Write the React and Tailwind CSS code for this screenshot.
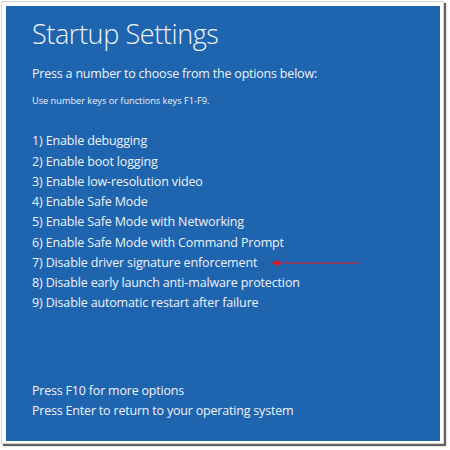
const options = [
  '1) Enable debugging',
  '2) Enable boot logging',
  '3) Enable low-resolution video',
  '4) Enable Safe Mode',
  '5) Enable Safe Mode with Networking',
  '6) Enable Safe Mode with Command Prompt',
  '7) Disable driver signature enforcement',
  '8) Disable early launch anti-malware protection',
  '9) Disable automatic restart after failure',
];

const Arrow = () => (
  <svg width="90" height="8" viewBox="0 0 90 8" className="ml-[14px]">
    <line x1="6" y1="4" x2="89" y2="4" stroke="#a8324f" strokeWidth="1.3" />
    <polygon points="0,4 8,1 8,7" fill="#e3141e" />
  </svg>
);

export default function App() {
  return (
    <div className="w-[450px] h-[450px] bg-white">
      <div className="w-[443px] h-[443px] ml-px mt-px border border-[#d4d4d4] bg-white p-[4px] shadow-[2px_2px_1px_rgba(60,60,60,0.8)]">
        <div className="w-[434px] h-[435px] bg-[#1f64ae] text-[#eef3fa] flex flex-col pl-[26px] font-['Open_Sans',sans-serif]">
          <h1 className="text-[27px] font-light leading-none mt-[14px] tracking-[-0.4px]">Startup Settings</h1>
          <p className="text-[12.5px] leading-none mt-[21px] tracking-[-0.2px]">Press a number to choose from the options below:</p>
          <p className="text-[9.2px] leading-none mt-[15px]">Use number keys or functions keys F1-F9.</p>
          <ul className="mt-[27px] text-[12.5px] tracking-[-0.15px]">
            {options.map((o, i) => (
              <li key={o} className="h-[20.25px] flex items-center">
                <span>{o}</span>
                {i === 6 && <Arrow />}
              </li>
            ))}
          </ul>
          <div className="mt-auto mb-[20px] text-[12.5px] tracking-[-0.2px]">
            <p className="h-[20px] flex items-center">Press F10 for more options</p>
            <p className="h-[20px] flex items-center">Press Enter to return to your operating system</p>
          </div>
        </div>
      </div>
    </div>
  );
}
